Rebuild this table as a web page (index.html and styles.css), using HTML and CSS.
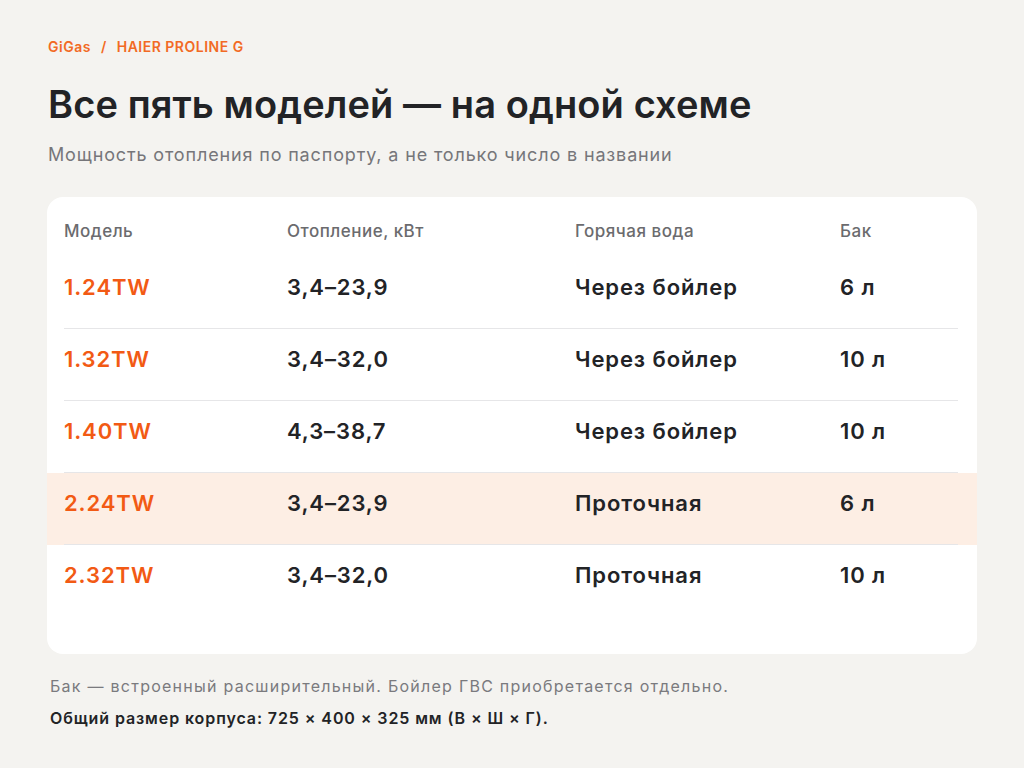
FILE: index.html
```html
<!DOCTYPE html>
<html lang="ru">
<head>
<meta charset="utf-8">
<title>Haier Proline G</title>
<link rel="stylesheet" href="styles.css">
</head>
<body>
<main class="page">
  <nav class="crumbs"><span>GiGas</span><span class="sep">/</span><span>HAIER PROLINE G</span></nav>
  <h1 class="title">Все пять моделей — на одной схеме</h1>
  <p class="subtitle">Мощность отопления по паспорту, а не только число в названии</p>

  <section class="card">
    <div class="row head">
      <div class="cells">
        <span>Модель</span><span>Отопление, кВт</span><span>Горячая вода</span><span>Бак</span>
      </div>
    </div>
    <div class="row">
      <div class="cells">
        <span class="model">1.24TW</span><span>3,4–23,9</span><span>Через бойлер</span><span>6 л</span>
      </div>
    </div>
    <div class="row">
      <div class="cells">
        <span class="model">1.32TW</span><span>3,4–32,0</span><span>Через бойлер</span><span>10 л</span>
      </div>
    </div>
    <div class="row">
      <div class="cells">
        <span class="model">1.40TW</span><span>4,3–38,7</span><span>Через бойлер</span><span>10 л</span>
      </div>
    </div>
    <div class="row hl">
      <div class="cells">
        <span class="model">2.24TW</span><span>3,4–23,9</span><span>Проточная</span><span>6 л</span>
      </div>
    </div>
    <div class="row last">
      <div class="cells">
        <span class="model">2.32TW</span><span>3,4–32,0</span><span>Проточная</span><span>10 л</span>
      </div>
    </div>
  </section>

  <p class="note">Бак — встроенный расширительный. Бойлер ГВС приобретается отдельно.</p>
  <p class="size">Общий размер корпуса: 725 × 400 × 325 мм (В × Ш × Г).</p>
</main>
</body>
</html>
```

FILE: styles.css
```css
* { box-sizing: border-box; }
html, body {
  margin: 0;
  padding: 0;
  background: #f4f3f0;
}
body {
  font-family: Inter, "Noto Sans", "Liberation Sans", sans-serif;
  color: #222326;
  width: 1024px;
  height: 768px;
  overflow: hidden;
}
.page {
  padding: 38px 47px 0 47px;
}
.crumbs {
  display: flex;
  gap: 10px;
  padding-left: 1px;
  font-size: 14px;
  font-weight: 600;
  line-height: 18px;
  color: #f26a24;
  letter-spacing: 0.5px;
}
.title {
  margin: 25px 0 0 1px;
  font-size: 38px;
  line-height: 46px;
  font-weight: 600;
  letter-spacing: 0.1px;
  color: #222326;
}
.subtitle {
  margin: 17px 0 0 1px;
  font-size: 18px;
  line-height: 22px;
  letter-spacing: 0.85px;
  color: #76767a;
}
.card {
  margin-top: 31px;
  background: #ffffff;
  border-radius: 16px;
  width: 930px;
  padding: 0 0 38px 0;
  overflow: hidden;
}
.row {
  padding: 0 19px 0 17px;
}
.cells {
  display: grid;
  grid-template-columns: 223px 288px 265px 1fr;
  align-items: start;
  padding: 16px 0 27px;
  font-size: 22px;
  line-height: 28px;
  font-weight: 600;
  letter-spacing: 0.9px;
  color: #222326;
  border-bottom: 1px solid #e6e6e8;
}
.row.head .cells {
  padding: 24px 0 16px;
  font-size: 17px;
  line-height: 20px;
  font-weight: 500;
  letter-spacing: 0.5px;
  color: #6b6b6e;
  border-bottom: none;
}
.row.last .cells { border-bottom: none; }
.row.hl { background: #fdeee4; }
.model { color: #f25a14; }
.note {
  margin: 22px 0 0 3px;
  font-size: 16px;
  line-height: 20px;
  letter-spacing: 1.25px;
  color: #7a7a7e;
}
.size {
  margin: 12px 0 0 3px;
  font-size: 16px;
  line-height: 20px;
  font-weight: 600;
  letter-spacing: 0.9px;
  color: #222326;
}
```
